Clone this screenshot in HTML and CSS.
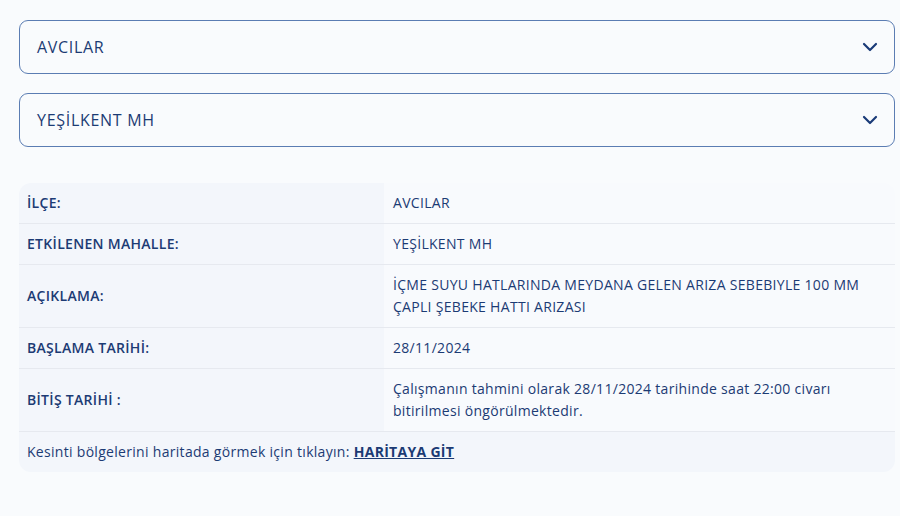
FILE: index.html
```html
<!DOCTYPE html>
<html lang="tr">
<head>
    <meta charset="UTF-8">
    <meta name="viewport" content="width=device-width, initial-scale=1.0">
    <title>Arıza Kesinti Bilgisi</title>
    <link rel="stylesheet" href="styles.css">
</head>
<body>
    <div class="page">
        <div class="select">
            <span>AVCILAR</span>
            <svg class="chevron" width="16" height="10" viewBox="0 0 16 10"><path d="M2 2l6 6 6-6" fill="none" stroke="#1a3b78" stroke-width="2.2" stroke-linecap="round" stroke-linejoin="round"/></svg>
        </div>
        <div class="select">
            <span>YEŞİLKENT MH</span>
            <svg class="chevron" width="16" height="10" viewBox="0 0 16 10"><path d="M2 2l6 6 6-6" fill="none" stroke="#1a3b78" stroke-width="2.2" stroke-linecap="round" stroke-linejoin="round"/></svg>
        </div>

        <table class="info">
            <tr>
                <th>İLÇE:</th>
                <td>AVCILAR</td>
            </tr>
            <tr>
                <th>ETKİLENEN MAHALLE:</th>
                <td>YEŞİLKENT MH</td>
            </tr>
            <tr>
                <th>AÇIKLAMA:</th>
                <td>İÇME SUYU HATLARINDA MEYDANA GELEN ARIZA SEBEBIYLE 100 MM ÇAPLI ŞEBEKE HATTI ARIZASI</td>
            </tr>
            <tr>
                <th>BAŞLAMA TARİHİ:</th>
                <td>28/11/2024</td>
            </tr>
            <tr>
                <th>BİTİŞ TARİHİ :</th>
                <td>Çalışmanın tahmini olarak 28/11/2024 tarihinde saat 22:00 civarı bitirilmesi öngörülmektedir.</td>
            </tr>
            <tr class="foot">
                <td colspan="2">Kesinti bölgelerini haritada görmek için tıklayın: <a href="#">HARİTAYA GİT</a></td>
            </tr>
        </table>
    </div>
</body>
</html>
```

FILE: styles.css
```css
body {
    margin: 0;
    padding: 0;
    background: #ffffff;
    font-family: 'Open Sans', 'Noto Sans', sans-serif;
    color: #1c3b74;
}
.page {
    background: #f9fbfd;
    padding: 20px 5px 44px 19px;
}
.select {
    display: flex;
    align-items: center;
    justify-content: space-between;
    height: 52px;
    padding: 0 16px 0 17px;
    border: 1.5px solid #5b7db3;
    border-radius: 9px;
    margin-bottom: 19px;
    font-size: 16px;
    letter-spacing: 0.7px;
    color: #1c3b74;
}
.chevron {
    display: block;
}
.info {
    width: 100%;
    margin-top: 36px;
    border-collapse: separate;
    border-spacing: 0;
    border-radius: 12px;
    overflow: hidden;
    font-size: 14px;
    letter-spacing: 0.3px;
    line-height: 22px;
}
.info th,
.info td {
    text-align: left;
    vertical-align: middle;
    padding: 9px 8px 9px 8px;
    border-bottom: 1px solid #e6e9ef;
}
.info th {
    width: 349px;
    font-weight: 600;
    background: #f3f6fb;
    color: #1c3b74;
}
.info td {
    padding-left: 9px;
    padding-right: 30px;
    background: #f8fafd;
    font-weight: 400;
    color: #1c3b74;
}
.info .foot td {
    background: #f3f6fb;
    border-bottom: none;
    padding-left: 8px;
}
.info a {
    color: #1c3b74;
    font-weight: 700;
    text-decoration: underline;
}
```
